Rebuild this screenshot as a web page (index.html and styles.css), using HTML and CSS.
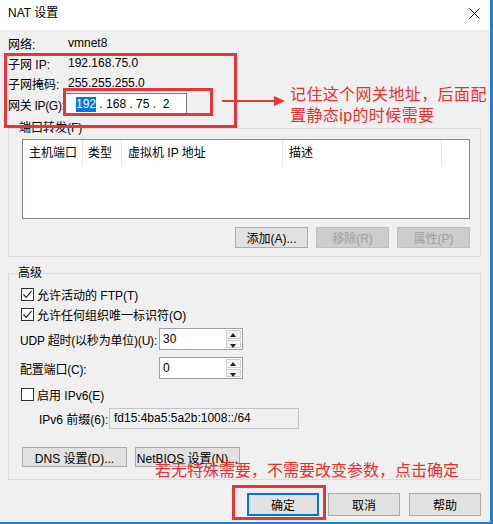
FILE: index.html
```html
<!DOCTYPE html>
<html lang="zh-CN">
<head>
    <meta charset="UTF-8">
    <title>NAT 设置</title>
    <link rel="stylesheet" href="styles.css">
</head>
<body>
    <div class="window">
        <div class="titlebar">
            <span class="title">NAT 设置</span>
            <svg class="close" width="11" height="11" viewBox="0 0 11 11">
                <path d="M0.5 0.5 L10.5 10.5 M10.5 0.5 L0.5 10.5" stroke="#111" stroke-width="1" fill="none"/>
            </svg>
        </div>

        <div class="client">
            <div class="info">
                <span>网络:</span><span>vmnet8</span>
                <span>子网 IP:</span><span>192.168.75.0</span>
                <span>子网掩码:</span><span>255.255.255.0</span>
                <span class="gw-label">网关 IP(G):</span>
                <div class="ipbox"><span class="sel">192</span><span class="ip-rest"> . 168 . 75 .  2</span></div>
            </div>

            <div class="group ports">
                <div class="group-title">端口转发(F)</div>
                <div class="listview">
                    <div class="list-head">
                        <span class="col c1">主机端口</span>
                        <span class="col c2">类型</span>
                        <span class="col c3">虚拟机 IP 地址</span>
                        <span class="col c4">描述</span>
                    </div>
                </div>
                <div class="btn-row">
                    <button class="btn">添加(A)...</button>
                    <button class="btn" disabled>移除(R)</button>
                    <button class="btn" disabled>属性(P)</button>
                </div>
            </div>

            <div class="group advanced">
                <div class="group-title">高级</div>
                <div class="check first">
                    <span class="box"><svg width="11" height="11" viewBox="0 0 11 11"><path d="M1.5 5.5 L4.2 8.3 L9.5 2.2" stroke="#222" stroke-width="1.2" fill="none"/></svg></span>
                    允许活动的 FTP(T)
                </div>
                <div class="check">
                    <span class="box"><svg width="11" height="11" viewBox="0 0 11 11"><path d="M1.5 5.5 L4.2 8.3 L9.5 2.2" stroke="#222" stroke-width="1.2" fill="none"/></svg></span>
                    允许任何组织唯一标识符(O)
                </div>
                <div class="field udp">
                    <span class="field-label">UDP 超时(以秒为单位)(U):</span>
                    <div class="spin">
                        <span class="spin-value">30</span>
                        <span class="spin-btns">
                            <span class="spin-up"></span>
                            <span class="spin-down"></span>
                        </span>
                    </div>
                </div>
                <div class="field cfg">
                    <span class="field-label">配置端口(C):</span>
                    <div class="spin">
                        <span class="spin-value">0</span>
                        <span class="spin-btns">
                            <span class="spin-up"></span>
                            <span class="spin-down"></span>
                        </span>
                    </div>
                </div>
                <div class="check ipv6">
                    <span class="box"></span>
                    启用 IPv6(E)
                </div>
                <div class="field prefix">
                    <span class="prefix-label">IPv6 前缀(6):</span>
                    <div class="readonly">fd15:4ba5:5a2b:1008::/64</div>
                </div>
                <div class="btn-row left">
                    <button class="btn wide">DNS 设置(D)...</button>
                    <button class="btn wide">NetBIOS 设置(N)...</button>
                </div>
            </div>

            <div class="actions">
                <button class="btn default">确定</button>
                <button class="btn">取消</button>
                <button class="btn">帮助</button>
            </div>
        </div>

        <div class="mark mark-a"></div>
        <div class="mark mark-b"></div>
        <div class="mark mark-c"></div>
        <svg class="arrow" width="80" height="14" viewBox="0 0 80 14">
            <line x1="10" y1="7" x2="66" y2="7" stroke="#e8353b" stroke-width="2"/>
            <polygon points="62,2 73,7 62,12" fill="#e8353b"/>
        </svg>
        <div class="note note-a">记住这个网关地址，后面配<br>置静态ip的时候需要</div>
        <div class="note note-b">若无特殊需要，不需要改变参数，点击确定</div>
    </div>
</body>
</html>
```

FILE: styles.css
```css
body {
    margin: 0;
    font-family: "Liberation Sans", "Noto Sans CJK SC", sans-serif;
    font-size: 12px;
    color: #000;
    background: #f0f0f0;
}
.window {
    position: relative;
    width: 493px;
    height: 524px;
    box-sizing: border-box;
    border-right: 3px solid #1883d7;
    border-bottom: 2px solid #1883d7;
    background: #f0f0f0;
    overflow: hidden;
}
.titlebar {
    height: 30px;
    box-sizing: border-box;
    padding: 5px 10px 0 8px;
    background: #fff;
    display: flex;
    justify-content: space-between;
    line-height: 16px;
}
.close {
    margin-top: 3px;
}
.client {
    padding: 3px 9px 0 8px;
}
.info {
    display: grid;
    grid-template-columns: 60px auto;
    grid-template-rows: 20px 20px 20px 22px;
    align-items: center;
    white-space: nowrap;
}
.gw-label {
    letter-spacing: -0.3px;
}
.ipbox {
    width: 122px;
    height: 22px;
    margin-left: -3px;
    box-sizing: border-box;
    background: #fff;
    border: 1px solid #7a7a7a;
    display: flex;
    align-items: center;
    padding-left: 10px;
    white-space: pre;
}
.sel {
    background: #0078d7;
    color: #fff;
    line-height: 15px;
}
.group {
    border: 1px solid #dcdcdc;
    padding: 0 10px 8px 12px;
}
.group-title {
    display: table;
    margin: -9px 0 0 -4px;
    padding: 0 1px;
    line-height: 16px;
    background: #f0f0f0;
}
.ports {
    margin-top: 13px;
    padding-left: 13px;
}
.listview {
    margin-top: 3px;
    height: 80px;
    box-sizing: border-box;
    background: #fff;
    border: 1px solid #828790;
}
.list-head {
    display: flex;
    height: 26px;
    line-height: 26px;
}
.col {
    box-sizing: border-box;
    border-right: 1px solid #e5e5e5;
    padding-left: 6px;
}
.c1 { width: 60px; }
.c2 { width: 39px; padding-left: 5px; }
.c3 { width: 161px; }
.c4 { width: 159px; }
.btn-row {
    margin-top: 8px;
    display: flex;
    justify-content: flex-end;
    gap: 8px;
}
.btn-row .btn {
    height: 21px;
}
.btn {
    width: 73px;
    height: 23px;
    padding: 0;
    font-family: inherit;
    font-size: 12px;
    color: #000;
    background: #e1e1e1;
    border: 1px solid #adadad;
    white-space: nowrap;
}
.btn:disabled {
    color: #a0a0a0;
    background: #cccccc;
    border-color: #bfbfbf;
}
.advanced {
    margin-top: 16px;
    padding-bottom: 12px;
}
.check {
    display: flex;
    align-items: center;
    gap: 3px;
    height: 20px;
}
.check.first {
    margin-top: 3px;
}
.box {
    width: 13px;
    height: 13px;
    box-sizing: border-box;
    border: 1px solid #333;
    background: #fff;
    display: flex;
    align-items: center;
    justify-content: center;
}
.field {
    display: flex;
    align-items: center;
    white-space: nowrap;
}
.udp {
    margin-top: 4px;
}
.cfg {
    margin-top: 7px;
}
.ipv6 {
    margin-top: 5px;
}
.field-label {
    width: 139px;
    margin-left: -1px;
    letter-spacing: -0.2px;
}
.spin {
    width: 84px;
    height: 22px;
    box-sizing: border-box;
    border: 1px solid #a0a0a0;
    background: #fff;
    display: flex;
    justify-content: space-between;
}
.spin-value {
    padding-left: 3px;
    line-height: 20px;
}
.spin-btns {
    width: 15px;
    margin: 1px;
    display: flex;
    flex-direction: column;
    gap: 1px;
}
.spin-up,
.spin-down {
    flex: 1;
    box-sizing: border-box;
    border: 1px solid #cfcfcf;
    background: #f3f3f3;
    position: relative;
}
.spin-up::after,
.spin-down::after {
    content: "";
    position: absolute;
    left: 3px;
    border-left: 3.5px solid transparent;
    border-right: 3.5px solid transparent;
}
.spin-up::after {
    top: 2px;
    border-bottom: 4px solid #222;
}
.spin-down::after {
    top: 3px;
    border-top: 4px solid #222;
}
.prefix {
    margin-top: 4px;
}
.prefix-label {
    width: 70px;
    margin-left: 18px;
}
.readonly {
    width: 190px;
    height: 21px;
    box-sizing: border-box;
    border: 1px solid #c4c4c4;
    background: #f0f0f0;
    padding-left: 4px;
    line-height: 19px;
}
.btn-row.left {
    margin-top: 18px;
    justify-content: flex-start;
    margin-left: 1px;
}
.btn-row .btn.wide {
    width: 105px;
    height: 20px;
}
.actions {
    margin-top: 13px;
    display: flex;
    justify-content: flex-end;
    gap: 9px;
}
.actions .btn {
    width: 72px;
}
.btn.default {
    border: 2px solid #0078d7;
}
.mark {
    position: absolute;
    border: 3px solid #e8353b;
}
.mark-a {
    left: 4px;
    top: 53px;
    width: 227px;
    height: 69px;
}
.mark-b {
    left: 63px;
    top: 88px;
    width: 144px;
    height: 22px;
}
.mark-c {
    left: 232px;
    top: 485px;
    width: 88px;
    height: 29px;
}
.arrow {
    position: absolute;
    left: 212px;
    top: 94px;
}
.note {
    position: absolute;
    color: #e8302e;
    font-size: 16px;
    line-height: 21px;
    white-space: nowrap;
}
.note-a {
    left: 290px;
    top: 84px;
    letter-spacing: 0.4px;
}
.note-b {
    left: 155px;
    top: 460px;
}
```
